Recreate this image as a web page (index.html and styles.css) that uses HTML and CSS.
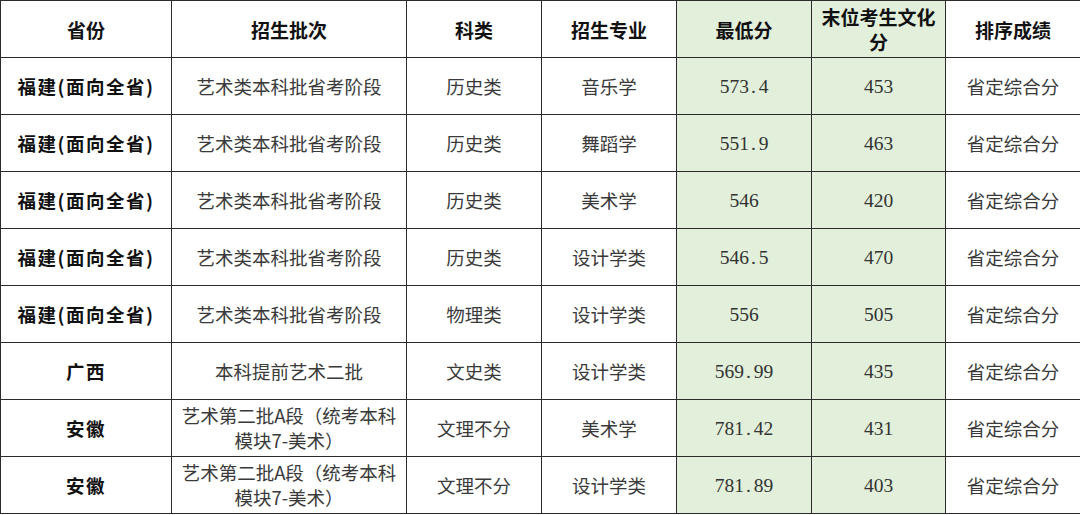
FILE: index.html
```html
<!DOCTYPE html>
<html lang="zh">
<head>
<meta charset="utf-8">
<link rel="stylesheet" href="styles.css">
</head>
<body>
<table class="score-table">
  <colgroup>
    <col class="c1"><col class="c2"><col class="c3"><col class="c4"><col class="c5"><col class="c6"><col class="c7">
  </colgroup>
  <thead>
    <tr>
      <th>省份</th><th>招生批次</th><th>科类</th><th>招生专业</th><th class="green">最低分</th><th class="green">末位考生文化<br>分</th><th>排序成绩</th>
    </tr>
  </thead>
  <tbody>
    <tr><td class="prov">福建(面向全省)</td><td>艺术类本科批省考阶段</td><td>历史类</td><td>音乐学</td><td class="green num">573<span class="dot">.</span>4</td><td class="green num">453</td><td>省定综合分</td></tr>
    <tr><td class="prov">福建(面向全省)</td><td>艺术类本科批省考阶段</td><td>历史类</td><td>舞蹈学</td><td class="green num">551<span class="dot">.</span>9</td><td class="green num">463</td><td>省定综合分</td></tr>
    <tr><td class="prov">福建(面向全省)</td><td>艺术类本科批省考阶段</td><td>历史类</td><td>美术学</td><td class="green num">546</td><td class="green num">420</td><td>省定综合分</td></tr>
    <tr><td class="prov">福建(面向全省)</td><td>艺术类本科批省考阶段</td><td>历史类</td><td>设计学类</td><td class="green num">546<span class="dot">.</span>5</td><td class="green num">470</td><td>省定综合分</td></tr>
    <tr><td class="prov">福建(面向全省)</td><td>艺术类本科批省考阶段</td><td>物理类</td><td>设计学类</td><td class="green num">556</td><td class="green num">505</td><td>省定综合分</td></tr>
    <tr><td class="prov">广西</td><td>本科提前艺术二批</td><td>文史类</td><td>设计学类</td><td class="green num">569<span class="dot">.</span>99</td><td class="green num">435</td><td>省定综合分</td></tr>
    <tr><td class="prov">安徽</td><td>艺术第二批A段（统考本科<br>模块7-美术）</td><td>文理不分</td><td>美术学</td><td class="green num">781<span class="dot">.</span>42</td><td class="green num">431</td><td>省定综合分</td></tr>
    <tr><td class="prov">安徽</td><td>艺术第二批A段（统考本科<br>模块7-美术）</td><td>文理不分</td><td>设计学类</td><td class="green num">781<span class="dot">.</span>89</td><td class="green num">403</td><td>省定综合分</td></tr>
  </tbody>
</table>
</body>
</html>
```

FILE: styles.css
```css
html, body {
  margin: 0;
  padding: 0;
  background: #ffffff;
}

.score-table {
  border-collapse: collapse;
  table-layout: fixed;
  width: 1080px;
  font-family: "Noto Sans CJK SC", "Liberation Serif", serif;
  font-size: 18.5px;
  color: #3a3a3a;
}

.c1 { width: 171px; }
.c2 { width: 235px; }
.c3 { width: 135px; }
.c4 { width: 135px; }
.c5 { width: 135px; }
.c6 { width: 134px; }
.c7 { width: 135px; }

.score-table th,
.score-table td {
  border: 1px solid #2b2b2b;
  text-align: center;
  vertical-align: middle;
  height: 57px;
  padding: 0 1px;
  line-height: 25px;
  box-sizing: border-box;
}

.score-table th {
  font-weight: bold;
  color: #111111;
  font-size: 19px;
}

.score-table td.prov {
  font-weight: bold;
  color: #111111;
  font-size: 18.5px;
  letter-spacing: 1.5px;
}

.green {
  background: #e2efda;
}

.score-table td.num {
  font-family: "Liberation Serif", "DejaVu Serif", serif;
  font-size: 19.5px;
  color: #333333;
}

.dot {
  display: inline-block;
  width: 9.75px;
  text-align: left;
  padding-left: 2px;
  box-sizing: border-box;
}
```
